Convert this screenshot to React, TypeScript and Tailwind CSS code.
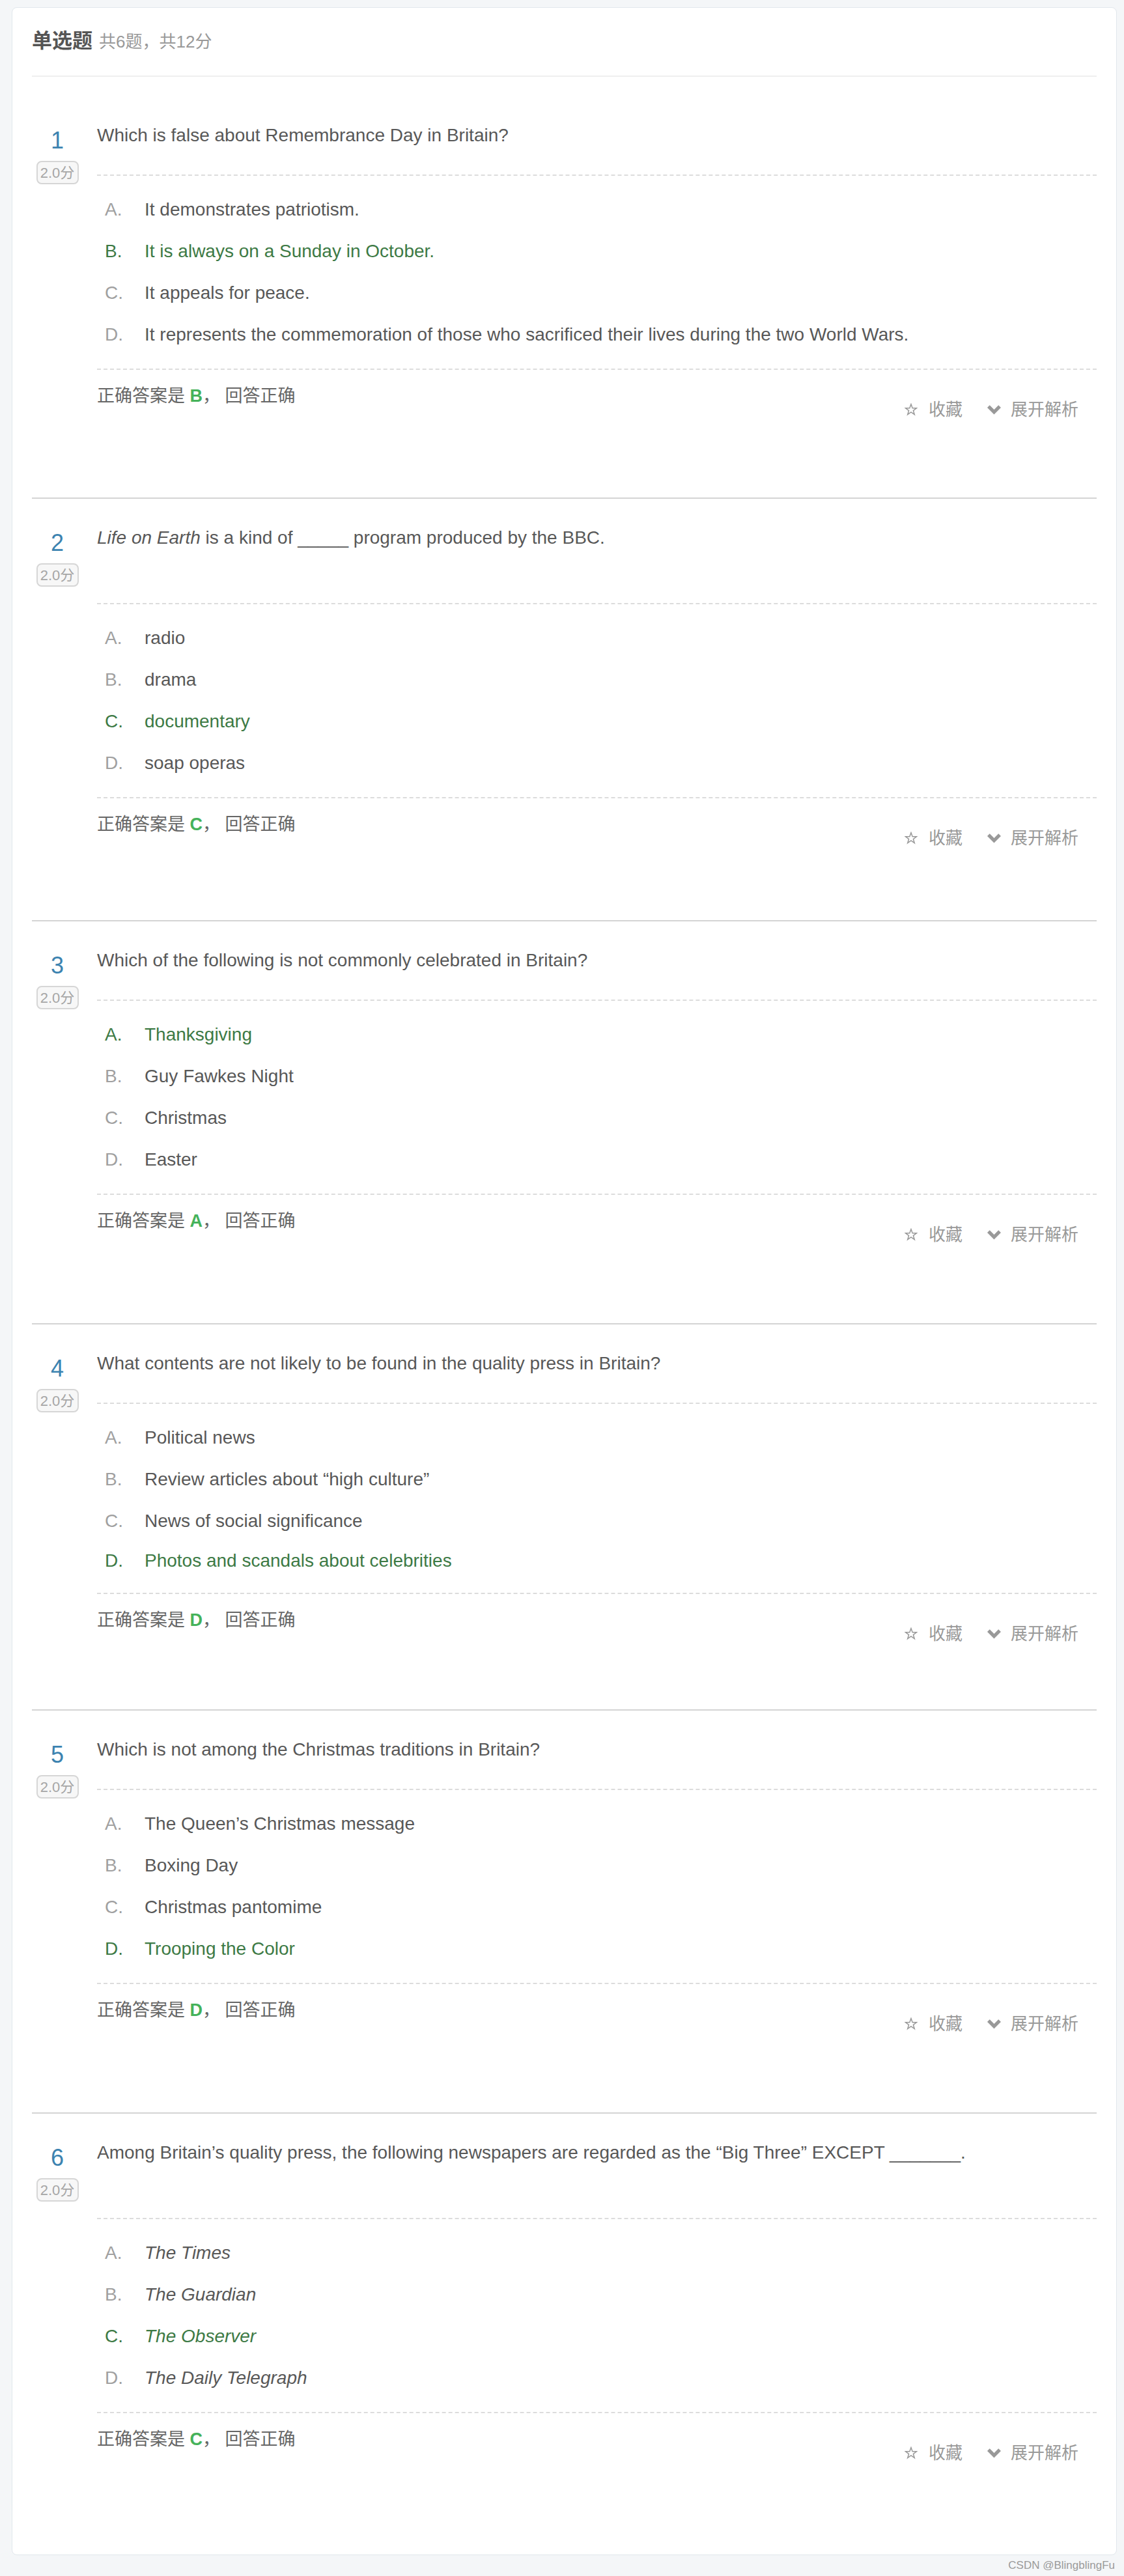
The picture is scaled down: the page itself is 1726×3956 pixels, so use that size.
import type { ReactNode } from "react";

type Question = {
  n: number;
  text: ReactNode;
  options: ReactNode[];
  answer: number;
  extraTop?: boolean;
  extraLine?: boolean;
  shortLast?: boolean;
  bottom: string;
  last?: boolean;
};

const letters = ["A", "B", "C", "D"];

const questions: Question[] = [
  {
    n: 1,
    text: "Which is false about Remembrance Day in Britain?",
    options: [
      "It demonstrates patriotism.",
      "It is always on a Sunday in October.",
      "It appeals for peace.",
      "It represents the commemoration of those who sacrificed their lives during the two World Wars.",
    ],
    answer: 1,
    extraTop: true,
    bottom: "pb-[115px]",
  },
  {
    n: 2,
    text: (
      <>
        <i>Life on Earth</i> is a kind of _____ program produced by the BBC.
      </>
    ),
    options: ["radio", "drama", "documentary", "soap operas"],
    answer: 2,
    extraLine: true,
    bottom: "pb-[106px]",
  },
  {
    n: 3,
    text: "Which of the following is not commonly celebrated in Britain?",
    options: ["Thanksgiving", "Guy Fawkes Night", "Christmas", "Easter"],
    answer: 0,
    bottom: "pb-[116px]",
  },
  {
    n: 4,
    text: "What contents are not likely to be found in the quality press in Britain?",
    options: [
      "Political news",
      "Review articles about \u201chigh culture\u201d",
      "News of social significance",
      "Photos and scandals about celebrities",
    ],
    answer: 3,
    shortLast: true,
    bottom: "pb-[96px]",
  },
  {
    n: 5,
    text: "Which is not among the Christmas traditions in Britain?",
    options: [
      "The Queen\u2019s Christmas message",
      "Boxing Day",
      "Christmas pantomime",
      "Trooping the Color",
    ],
    answer: 3,
    bottom: "pb-[116px]",
  },
  {
    n: 6,
    text: "Among Britain\u2019s quality press, the following newspapers are regarded as the \u201cBig Three\u201d EXCEPT _______.",
    options: [
      <i>The Times</i>,
      <i>The Guardian</i>,
      <i>The Observer</i>,
      <i>The Daily Telegraph</i>,
    ],
    answer: 2,
    extraLine: true,
    bottom: "pb-[136px]",
    last: true,
  },
];

function StarIcon() {
  return (
    <svg viewBox="0 0 24 24" className="w-[20px] h-[20px]" fill="none" stroke="#999" strokeWidth="1.8" strokeLinejoin="miter">
      <polygon points="12,2 14.6,9.2 22.2,9.3 16.1,13.9 18.3,21.2 12,16.8 5.7,21.2 7.9,13.9 1.8,9.3 9.4,9.2" />
    </svg>
  );
}

function ChevronIcon() {
  return (
    <svg viewBox="0 0 24 16" className="w-[23px] h-[16px]" fill="none" stroke="#999" strokeWidth="5.5" strokeLinecap="butt" strokeLinejoin="miter">
      <polyline points="3,3 12,12 21,3" />
    </svg>
  );
}

function QuestionBlock({ q }: { q: Question }) {
  return (
    <div
      className={`flex ${q.extraTop ? "pt-[30px]" : ""} ${
        q.last ? "" : "border-b-2 border-[#d4d4d4]"
      }`}
    >
      <div className="w-[78px] shrink-0 flex flex-col items-center pt-[40px]">
        <div className="text-[36px] leading-[56px] text-[#3c83b0]">{q.n}</div>
        <div className="mt-[3px] h-[36px] w-[65px] rounded-[8px] border-2 border-[#d6d6d6] bg-[#f7f7f7] flex items-center justify-center text-[22px] text-[#a6a6a6]">
          2.0分
        </div>
      </div>
      <div className="ml-[22px] flex-1">
        <div className="pt-[40px] pb-[40px] text-[28px] leading-[40px] text-[#585858]">
          {q.text}
          {q.extraLine && <div className="h-[40px]" />}
        </div>
        <div className="border-t-2 border-dashed border-[#dcdcdc] py-[20px]">
          {q.options.map((opt, i) => {
            const right = i === q.answer;
            const h = q.shortLast && i === 3 ? "h-[58px]" : "h-[64px]";
            return (
              <div
                key={i}
                className={`flex items-center pl-[12px] text-[28px] leading-[40px] ${h} ${
                  right ? "text-[#3d7a45]" : "text-[#585858]"
                }`}
              >
                <span className={`w-[61px] shrink-0 ${right ? "" : "text-[#a0a0a0]"}`}>
                  {letters[i]}.
                </span>
                <span>{opt}</span>
              </div>
            );
          })}
        </div>
        <div
          className={`border-t-2 border-dashed border-[#dcdcdc] pt-[20px] ${q.bottom} flex items-start justify-between`}
        >
          <div className="text-[27px] leading-[40px] text-[#666]">
            正确答案是 <b className="text-[#45b25a]">{letters[q.answer]}</b>， 回答正确
          </div>
          <div className="mt-[21px] mr-[28px] flex items-center text-[26px] leading-[40px] text-[#999]">
            <span className="mr-[17px]">
              <StarIcon />
            </span>
            <span>收藏</span>
            <span className="ml-[37px] mr-[14px]">
              <ChevronIcon />
            </span>
            <span>展开解析</span>
          </div>
        </div>
      </div>
    </div>
  );
}

export default function App() {
  return (
    <div className="relative min-h-screen bg-[#f4f6f8] pt-[11px] pl-[18px] pr-[11px] pb-[24px] font-['Liberation_Sans','Noto_Sans_CJK_SC',sans-serif]">
      <div className="rounded-[8px] border border-[#e1e7ec] bg-white px-[30px]">
        <div className="flex items-baseline pt-[31px] pb-[32px] border-b-2 border-[#efefef]">
          <span className="text-[31px] leading-[40px] font-bold text-[#555]">单选题</span>
          <span className="ml-[10px] text-[26px] leading-[40px] text-[#999]">共6题，共12分</span>
        </div>
        {questions.map((q) => (
          <QuestionBlock key={q.n} q={q} />
        ))}
      </div>
      <div className="absolute right-[14px] bottom-[6px] text-[17px] leading-[20px] text-[#9a9a9a]">
        CSDN @BlingblingFu
      </div>
    </div>
  );
}
